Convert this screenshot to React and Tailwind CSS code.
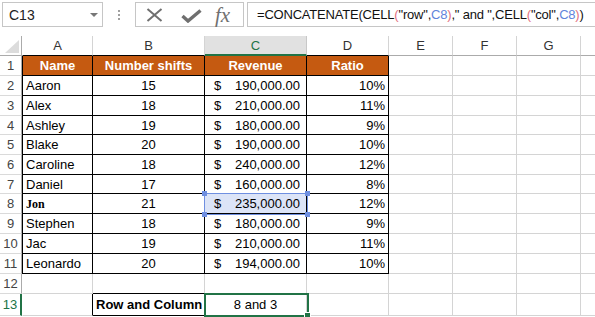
import React from "react";

const data = [
  ["Aaron", 15, "190,000.00", "10%"],
  ["Alex", 18, "210,000.00", "11%"],
  ["Ashley", 19, "180,000.00", "9%"],
  ["Blake", 20, "190,000.00", "10%"],
  ["Caroline", 18, "240,000.00", "12%"],
  ["Daniel", 17, "160,000.00", "8%"],
  ["Jon", 21, "235,000.00", "12%"],
  ["Stephen", 18, "180,000.00", "9%"],
  ["Jac", 19, "210,000.00", "11%"],
  ["Leonardo", 20, "194,000.00", "10%"],
];

const heights = ["h-[20px]", "h-[20px]", "h-[20px]", "h-[19px]", "h-[20px]", "h-[20px]", "h-[19px]", "h-[20px]", "h-[20px]", "h-[20px]", "h-[20px]", "h-[20px]", "h-[22px]"];

function RowHeader({ n, selected }) {
  return (
    <div
      className={
        "w-[22px] shrink-0 flex items-center justify-center border-b border-b-[#dadada] " +
        (selected ? "border-r-2 border-r-[#217346] text-[#217346]" : "border-r border-r-[#ababab] text-[#444]")
      }
    >
      {n}
    </div>
  );
}

function TopBar() {
  return (
    <div className="h-[36px] flex items-start pt-[2px] pl-[2px] bg-white">
      <div className="w-[101px] h-[25px] border border-[#c6c6c6] flex items-center pl-[6px] text-[14px] text-[#222] relative">
        C13
        <svg className="absolute left-[87px] top-[10px]" width="8" height="4" viewBox="0 0 8 4">
          <polygon points="0,0 8,0 4,4" fill="#777" />
        </svg>
      </div>
      <div className="w-[32px] h-[25px] flex flex-col items-center justify-center gap-[2px]">
        <div className="w-[2px] h-[2px] bg-[#a0a0a0]" />
        <div className="w-[2px] h-[2px] bg-[#a0a0a0]" />
        <div className="w-[2px] h-[2px] bg-[#a0a0a0]" />
      </div>
      <div className="w-[109px] h-[25px] border border-[#c6c6c6] flex items-center relative">
        <svg className="absolute left-[10px] top-[5px]" width="17" height="14" viewBox="0 0 17 14">
          <line x1="1.5" y1="1" x2="15.5" y2="13" stroke="#6f6f6f" strokeWidth="2" />
          <line x1="15.5" y1="1" x2="1.5" y2="13" stroke="#6f6f6f" strokeWidth="2" />
        </svg>
        <svg className="absolute left-[45px] top-[6px]" width="21" height="14" viewBox="0 0 21 14">
          <polyline points="1.5,7 7,12 19.5,1.5" fill="none" stroke="#6f6f6f" strokeWidth="3.4" strokeLinejoin="miter" />
        </svg>
        <span
          className="absolute left-[79px] top-[0px] text-[21px] italic text-[#707070] leading-[24px]"
          style={{ fontFamily: '"Liberation Serif", serif' }}
        >
          fx
        </span>
      </div>
      <div className="ml-[3px] flex-1 h-[25px] border border-r-0 border-[#c6c6c6] flex items-center pl-[9px] text-[13px] tracking-[-0.2px] text-[#111] whitespace-nowrap overflow-hidden">
        <span>=CONCATENATE(CELL</span>
        <span className="text-[#e2707e]">(</span>
        <span>"row",</span>
        <span className="text-[#5f84db]">C8</span>
        <span className="text-[#e2707e]">)</span>
        <span>," and ",CELL</span>
        <span className="text-[#e2707e]">(</span>
        <span>"col",</span>
        <span className="text-[#5f84db]">C8</span>
        <span className="text-[#e2707e]">)</span>
        <span>)</span>
      </div>
    </div>
  );
}

function ColHeaders() {
  const g = "border-r border-r-[#d4d4d4] flex items-center justify-center text-[#333]";
  return (
    <div className="flex h-[20px]">
      <div className="w-[22px] shrink-0 border-r border-r-[#ababab] border-b border-b-[#ababab] relative">
        <svg className="absolute left-[5px] top-[4px]" width="14" height="13" viewBox="0 0 14 13">
          <polygon points="14,0 14,13 0,13" fill="#dcdcdc" />
        </svg>
      </div>
      <div className={"w-[71px] shrink-0 border-l border-l-white border-b border-b-black " + g}>A</div>
      <div className={"w-[112px] shrink-0 border-b border-b-black " + g}>B</div>
      <div className="w-[102px] shrink-0 border-r border-r-[#c8c8c8] border-b-2 border-b-[#217346] bg-[#e1e1e1] text-[#217346] flex items-center justify-center">C</div>
      <div className={"w-[82px] shrink-0 border-b border-b-black " + g}>D</div>
      <div className={"w-[64px] shrink-0 border-b border-b-[#ababab] " + g}>E</div>
      <div className={"w-[64px] shrink-0 border-b border-b-[#ababab] " + g}>F</div>
      <div className={"w-[64px] shrink-0 border-b border-b-[#ababab] " + g}>G</div>
      <div className="flex-1 border-b border-b-[#ababab]" />
    </div>
  );
}

function EmptyCells() {
  const c = "shrink-0 border-r border-b border-[#d4d4d4]";
  return (
    <>
      <div className={"w-[64px] " + c} />
      <div className={"w-[64px] " + c} />
      <div className={"w-[64px] " + c} />
      <div className="flex-1 border-b border-[#d4d4d4]" />
    </>
  );
}

export default function App() {
  const blk = "shrink-0 border-r border-b border-black whitespace-nowrap";
  return (
    <div
      className="w-[595px] h-[317px] bg-white overflow-hidden text-[13px] leading-none"
      style={{ fontFamily: '"Liberation Sans", Arial, sans-serif' }}
    >
      <TopBar />
      <div className="relative">
        <ColHeaders />
        {/* Row 1 */}
        <div className={"flex " + heights[0]}>
          <RowHeader n={1} />
          <div className={"w-[71px] border-l border-l-black bg-[#c55a11] text-white font-bold flex items-center justify-center " + blk}>Name</div>
          <div className={"w-[112px] bg-[#c55a11] text-white font-bold flex items-center justify-center " + blk}>Number shifts</div>
          <div className={"w-[102px] bg-[#c55a11] text-white font-bold flex items-center justify-center " + blk}>Revenue</div>
          <div className={"w-[82px] bg-[#c55a11] text-white font-bold flex items-center justify-center " + blk}>Ratio</div>
          <EmptyCells />
        </div>
        {data.map((r, i) => (
          <div key={i} className={"flex " + heights[i + 1]}>
            <RowHeader n={i + 2} />
            <div className={"w-[71px] border-l border-l-black flex items-center pl-[3px] text-black " + blk}>
              {r[0] === "Jon" ? (
                <span className="font-bold text-[12px]" style={{ fontFamily: '"Liberation Serif", serif' }}>
                  Jon
                </span>
              ) : (
                r[0]
              )}
            </div>
            <div className={"w-[112px] flex items-center justify-center text-black " + blk}>{r[1]}</div>
            <div className={"w-[102px] flex items-center justify-between pl-[9px] pr-[6px] text-black " + blk + (r[0] === "Jon" ? " bg-[#dce4f7]" : "")}>
              <span>$</span>
              <span>{r[2]}</span>
            </div>
            <div className={"w-[82px] flex items-center justify-end pr-[3px] text-black " + blk}>{r[3]}</div>
            <EmptyCells />
          </div>
        ))}
        {/* Row 12 */}
        <div className={"flex " + heights[11]}>
          <RowHeader n={12} />
          <div className="w-[71px] shrink-0 border-l border-l-white border-r border-b border-[#d4d4d4]" />
          <div className="w-[112px] shrink-0 border-r border-r-[#d4d4d4] border-b border-b-black" />
          <div className="w-[102px] shrink-0 border-r border-b border-[#d4d4d4]" />
          <div className="w-[82px] shrink-0 border-r border-b border-[#d4d4d4]" />
          <EmptyCells />
        </div>
        {/* Row 13 */}
        <div className={"flex " + heights[12]}>
          <RowHeader n={13} selected />
          <div className="w-[71px] shrink-0 border-l border-l-white border-r border-r-black border-b border-b-[#d4d4d4]" />
          <div className="w-[112px] shrink-0 border-r border-b border-black flex items-center pl-[3px] font-bold text-black whitespace-nowrap">Row and Column</div>
          <div className="w-[102px] shrink-0 border-r border-b border-[#d4d4d4] flex items-center justify-center text-black">8 and 3</div>
          <div className="w-[82px] shrink-0 border-r border-b border-[#d4d4d4]" />
          <EmptyCells />
        </div>

        {/* C8 reference highlight */}
        <div className="absolute left-[204px] top-[157px] w-[104px] h-[22px] border border-[#6f8fe0] pointer-events-none">
          <div className="absolute -left-[3px] -top-[3px] w-[5px] h-[5px] bg-[#6f8fe0]" />
          <div className="absolute -right-[3px] -top-[3px] w-[5px] h-[5px] bg-[#6f8fe0]" />
          <div className="absolute -left-[3px] -bottom-[3px] w-[5px] h-[5px] bg-[#6f8fe0]" />
          <div className="absolute -right-[3px] -bottom-[3px] w-[5px] h-[5px] bg-[#6f8fe0]" />
        </div>

        {/* C13 selection */}
        <div className="absolute left-[204px] top-[257px] w-[105px] h-[24px] border-2 border-[#217346] pointer-events-none">
          <div className="absolute -right-[4px] -bottom-[4px] w-[7px] h-[7px] bg-[#217346] border border-white" />
        </div>
      </div>
    </div>
  );
}
